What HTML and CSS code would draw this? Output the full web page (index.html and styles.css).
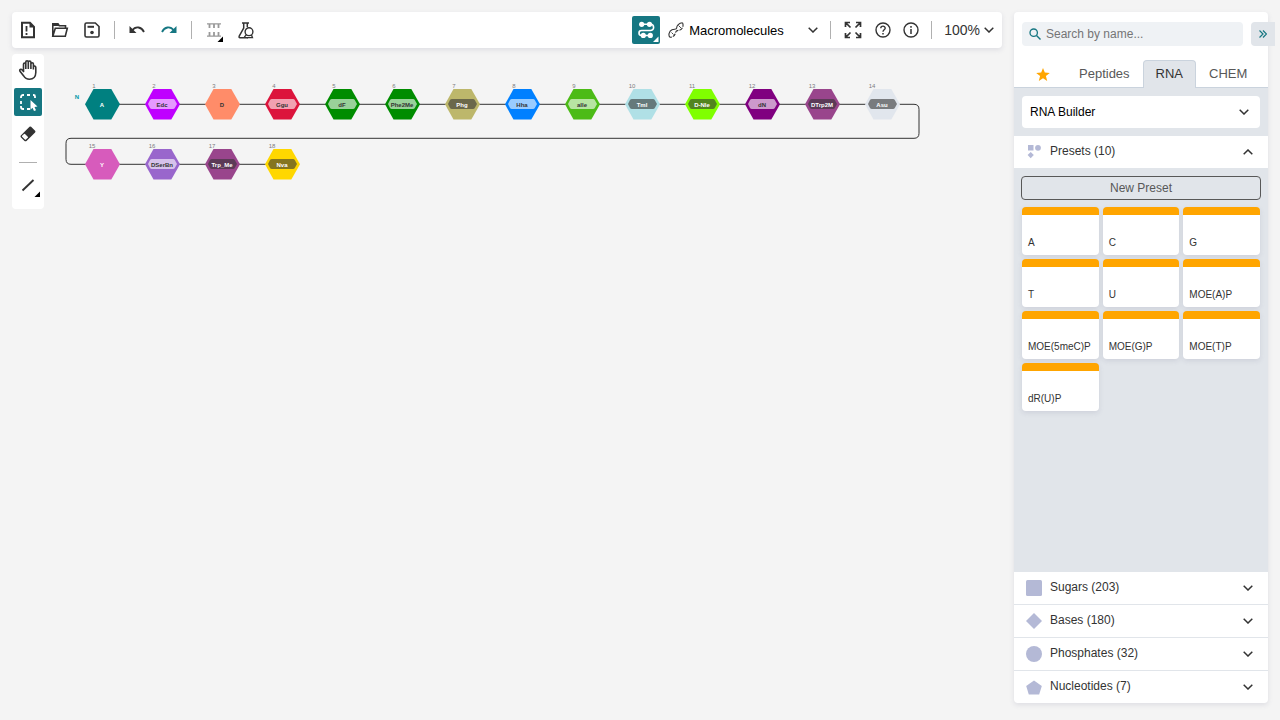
FILE: index.html
```html
<!DOCTYPE html>
<html lang="en">
<head>
<meta charset="utf-8">
<title>Macromolecules editor</title>
<link rel="stylesheet" href="styles.css">
</head>
<body>
<div class="app">
  <main class="editor">
    <header class="topbar">
      <button class="tool" aria-label="New document"><svg width="16" height="18" viewBox="0 0 16 18"><path d="M2 1.800h8l4 4v10.400H2z" fill="none" stroke="#333" stroke-width="2"/><path d="M9.500 1v5.500H14.500z" fill="#333"/><path d="M6.500 5v5.500M6.500 12v2" stroke="#333" stroke-width="1.800"/></svg></button>
      <button class="tool" aria-label="Open"><svg width="18" height="16" viewBox="0 0 18 16"><path d="M1.800 14V1.800h5l1.500 2h6.200v2.400M1.800 14.200l2.500-8h12l-2 8z" fill="none" stroke="#333" stroke-width="1.600"/><path d="M1 1h6l2 3H1z" fill="#333"/></svg></button>
      <button class="tool" aria-label="Save"><svg width="16" height="16" viewBox="0 0 16 16"><path d="M2.500 1h8.800L15 4.500v9a1.500 1.500 0 0 1-1.500 1.500h-11A1.500 1.500 0 0 1 1 13.500v-11A1.500 1.500 0 0 1 2.500 1z" fill="none" stroke="#333" stroke-width="1.600"/><path d="M3.500 4.800h6.500" stroke="#333" stroke-width="2"/><circle cx="8" cy="10.500" r="1.800" fill="#333"/></svg></button>
      <span class="divider"></span>
      <button class="tool" aria-label="Undo"><svg width="16" height="12" viewBox="0 0 16 12"><path d="M3 6.500C7 1.500 12.500 3 15 8" fill="none" stroke="#333" stroke-width="1.800"/><path d="M.5 2v7h7z" fill="#333"/></svg></button>
      <button class="tool" aria-label="Redo"><svg width="16" height="12" viewBox="0 0 16 12"><path d="M13 6.500C9 1.500 3.500 3 1 8" fill="none" stroke="#167782" stroke-width="1.800"/><path d="M15.500 2v7h-7z" fill="#167782"/></svg></button>
      <span class="divider"></span>
      <button class="tool" aria-label="Arrange chains"><svg width="28" height="28" viewBox="0 0 28 28"><path d="M7 7.800h14M7 20.200h14" stroke="#999" stroke-width="1.200"/><path d="M9.500 8v4M14 8v4M18.500 8v4M9.500 16v4M14 16v4M18.500 16v4" stroke="#999" stroke-width="1.800"/><path d="M23 20.500V26h-5.500z" fill="#000"/></svg></button>
      <button class="tool" aria-label="Calculate properties"><svg width="16" height="17" viewBox="0 0 16 17"><path d="M4 1h7M5.700 1v5L1.200 14.200c-.4.900 0 1.500.8 1.500h8M9.300 1v4" fill="none" stroke="#333" stroke-width="1.500"/><circle cx="11" cy="9.700" r="3.900" fill="#fff" stroke="#333" stroke-width="1.400"/><path d="M8.500 12.500l-2.200 2.700M13.500 13L14.500 15.700H9" fill="none" stroke="#333" stroke-width="1.300"/></svg></button>
      <span class="spacer"></span>
      <button class="tool active" aria-label="Snake layout"><svg width="28" height="28" viewBox="0 0 28 28"><path d="M9.500 8.300h9a3 3 0 0 1 0 6.200h-9a2.500 2.500 0 0 0 0 5h9" fill="none" stroke="#fff" stroke-width="1.600"/><circle cx="9.700" cy="8.300" r="2.600" fill="#fff"/><circle cx="17.500" cy="8.300" r="2.600" fill="#fff"/><circle cx="11.300" cy="19.400" r="2.600" fill="#fff"/><circle cx="18.300" cy="19.400" r="2.600" fill="#fff"/><path d="M26.500 20.500V26h-5.500z" fill="#fff"/></svg></button>
      <div class="mode">
        <svg width="16" height="16" viewBox="0 0 16 16" fill="none" stroke="#333" stroke-width="1.100"><path d="M2 15.300C0 13.500 1 9 4 7.700c2.500-1 4.500.3 4.700-1.700C8.500 3.500 11 1 14.500.8"/><path d="M14.500.8c1.500 3-.3 7-3.500 7.500-2 .3-3 .2-3.400 2C7 13.500 5 15.300 2 15.300" stroke-dasharray="4 1"/><path d="M10.500 3.500l2.500 2.500M3.500 10.500l2 2" stroke-width=".900"/></svg>
        <select aria-label="Editor mode"><option>Macromolecules</option><option>Molecules</option></select>
        <svg width="10" height="6" viewBox="0 0 10 6"><path d="M.7.700L5 5 9.300.700" class="chev"/></svg>
      </div>
      <span class="divider"></span>
      <button class="tool" aria-label="Full screen"><svg width="18" height="18" viewBox="0 0 18 18"><path d="M2 2l4.500 4.500M16 2l-4.500 4.500M2 16l4.500-4.500M16 16l-4.500-4.500M1.500 6V1.500H6M12 1.500h4.500V6M1.500 12v4.500H6M16.500 12v4.500H12" fill="none" stroke="#333" stroke-width="1.700"/></svg></button>
      <div class="pair">
        <button class="tool" aria-label="Help"><svg width="16" height="16" viewBox="0 0 16 16"><circle cx="8" cy="8" r="7" fill="none" stroke="#333" stroke-width="1.400"/><path d="M5.800 6.300C5.800 3.400 10.300 3.500 10.200 6.200 10.100 7.800 8 7.900 8 9.800" fill="none" stroke="#333" stroke-width="1.400"/><path d="M8 11v1.600" stroke="#333" stroke-width="1.500"/></svg></button>
        <button class="tool" aria-label="About"><svg width="16" height="16" viewBox="0 0 16 16"><circle cx="8" cy="8" r="7" fill="none" stroke="#333" stroke-width="1.400"/><path d="M8 7v5M8 4v1.700" stroke="#333" stroke-width="1.500"/></svg></button>
      </div>
      <span class="divider close"></span>
      <button class="zoom">100%<svg width="10" height="6" viewBox="0 0 10 6"><path d="M.7.700L5 5 9.300.700" class="chev"/></svg></button>
    </header>

    <div class="workspace">
      <nav class="sidebar" aria-label="Tools">
        <button class="tool" aria-label="Hand"><svg width="20" height="22" viewBox="0 0 20 22"><path d="M5.500 12V5.200c0-1.700 2.300-1.700 2.300 0M7.800 10V3c0-1.700 2.500-1.700 2.500 0v7M10.300 3.200c0-1.600 2.600-1.600 2.600 0V10M12.900 5c0-1.600 2.500-1.600 2.500 0v5.500M15.400 8c.3-1.400 2.400-1.200 2.400.4v5.200c0 4-2.500 6.700-6.300 6.700-3.200 0-4.700-1.400-6-3.600L2 12.300c-1-1.800 1-2.700 2.200-1.300l1.800 2" fill="none" stroke="#333" stroke-width="1.600"/></svg></button>
        <button class="tool active" aria-label="Select"><svg width="28" height="28" viewBox="0 0 28 28"><path d="M7 10V9a2 2 0 0 1 2-2h1M13 7h3M19 7h.500a1.500 1.500 0 0 1 1.500 1.500V10M7 13v3M7 18v1a2 2 0 0 0 2 2h1M13 21h3" fill="none" stroke="#fff" stroke-width="1.800"/><path d="M16.500 12l7 6.500-3 .4 1.500 3.300-2 .9-1.500-3.300-2 1.900z" fill="#fff"/></svg></button>
        <button class="tool" aria-label="Erase"><svg width="18" height="18" viewBox="0 0 18 18"><path d="M10.500 1.800q.8-.8 1.600 0l4 4q.8.800 0 1.600l-8.600 8.500q-1 .8-2 0l-3.700-3.700q-.7-.9 0-1.700z" fill="#333"/><path d="M5.500 9.500l2.800 2.800-1.900 1.800-2.800-2.800z" fill="#fff" stroke="#fff" stroke-width="1.400" stroke-linejoin="round"/></svg></button>
        <span class="rule"></span>
        <button class="tool" aria-label="Bond"><svg width="28" height="28" viewBox="0 0 28 28"><path d="M8.500 18.500l11-10.500" stroke="#333" stroke-width="1.900"/><path d="M26 19.500V25h-5.500z" fill="#000"/></svg></button>
      </nav>

      <svg class="canvas" role="img" aria-label="Peptide sequence">
        <defs>
          <path id="hex" d="M-17 .3L-8.500-15H9.300L18 .3 9.300 15.600H-8.500z"/>
          <path id="pill" d="M-14 0L-12-4Q-11.500-5-10-5H11Q12.300-5 12.800-4L15 0 12.800 4Q12.300 5 11 5H-10Q-11.500 5-12 4z"/>
        </defs>
        <path class="bond" d="M58 50.300H870q5 0 5 5V79.300q0 5-5 5H27q-5 0-5 5v16q0 5 5 5H238"/>
        <text class="terminus" x="33" y="45">N</text>
        <g transform="translate(58 50)"><use href="#hex" fill="#008080"/><text class="num" x="-8" y="-16">1</text><text class="name light" y="3">A</text></g>
        <g transform="translate(118 50)"><use href="#hex" fill="#bf00ff"/><use href="#pill" class="pale"/><text class="num" x="-8" y="-16">2</text><text class="name" y="3">Edc</text></g>
        <g transform="translate(178 50)"><use href="#hex" fill="#ff8c69"/><text class="num" x="-8" y="-16">3</text><text class="name" y="3">D</text></g>
        <g transform="translate(238 50)"><use href="#hex" fill="#dc143c"/><use href="#pill" class="pale"/><text class="num" x="-8" y="-16">4</text><text class="name" y="3">Ggu</text></g>
        <g transform="translate(298 50)"><use href="#hex" fill="#008c00"/><use href="#pill" class="pale"/><text class="num" x="-8" y="-16">5</text><text class="name" y="3">dF</text></g>
        <g transform="translate(358 50)"><use href="#hex" fill="#008c00"/><use href="#pill" class="pale"/><text class="num" x="-8" y="-16">6</text><text class="name" y="3">Phe2Me</text></g>
        <g transform="translate(418 50)"><use href="#hex" fill="#bdb76b"/><use href="#pill" class="dark"/><text class="num" x="-8" y="-16">7</text><text class="name light" y="3">Phg</text></g>
        <g transform="translate(478 50)"><use href="#hex" fill="#0080ff"/><use href="#pill" class="pale"/><text class="num" x="-8" y="-16">8</text><text class="name" y="3">Hha</text></g>
        <g transform="translate(538 50)"><use href="#hex" fill="#4cbb17"/><use href="#pill" class="pale"/><text class="num" x="-8" y="-16">9</text><text class="name" y="3">aIle</text></g>
        <g transform="translate(598 50)"><use href="#hex" fill="#b0e0e6"/><use href="#pill" class="dark"/><text class="num" x="-10" y="-16">10</text><text class="name light" y="3">Tml</text></g>
        <g transform="translate(658 50)"><use href="#hex" fill="#80ff00"/><use href="#pill" class="dark"/><text class="num" x="-10" y="-16">11</text><text class="name light" y="3">D-Nle</text></g>
        <g transform="translate(718 50)"><use href="#hex" fill="#800080"/><use href="#pill" class="pale"/><text class="num" x="-10" y="-16">12</text><text class="name" y="3">dN</text></g>
        <g transform="translate(778 50)"><use href="#hex" fill="#99458c"/><use href="#pill" class="dark"/><text class="num" x="-10" y="-16">13</text><text class="name light" y="3">DTrp2M</text></g>
        <g transform="translate(838 50)"><use href="#hex" fill="#e1e6ed"/><use href="#pill" class="dark"/><text class="num" x="-10" y="-16">14</text><text class="name light" y="3">Asu</text></g>
        <g transform="translate(58 110)"><use href="#hex" fill="#d75bbc"/><text class="num" x="-10" y="-16">15</text><text class="name light" y="3">Y</text></g>
        <g transform="translate(118 110)"><use href="#hex" fill="#9966cc"/><use href="#pill" class="pale"/><text class="num" x="-10" y="-16">16</text><text class="name" y="3">DSerBn</text></g>
        <g transform="translate(178 110)"><use href="#hex" fill="#99458c"/><use href="#pill" class="dark"/><text class="num" x="-10" y="-16">17</text><text class="name light" y="3">Trp_Me</text></g>
        <g transform="translate(238 110)"><use href="#hex" fill="#ffd700"/><use href="#pill" class="dark"/><text class="num" x="-10" y="-16">18</text><text class="name light" y="3">Nva</text></g>
      </svg>
    </div>
  </main>

  <aside class="library">
    <div class="search-row">
      <label class="search">
        <svg width="12" height="12" viewBox="0 0 12 12"><circle cx="4.700" cy="4.700" r="3.700" fill="none" stroke="#167782" stroke-width="1.300"/><path d="M7.500 7.500l4 4" stroke="#167782" stroke-width="1.400"/></svg>
        <input type="text" placeholder="Search by name..." aria-label="Search by name">
      </label>
      <button class="collapse" aria-label="Hide library"><svg width="8" height="8" viewBox="0 0 8 8"><path d="M.5.500L4 4 .5 7.500M4 .500L7.500 4 4 7.500" fill="none" stroke="#167782" stroke-width="1.200"/></svg></button>
    </div>
    <div class="tabs" role="tablist">
      <button class="tab" role="tab" aria-label="Favorites"><svg width="14" height="13" viewBox="0 0 14 13"><path d="M7 0l1.800 4.600 5 .3-3.900 3.200L11.200 13 7 10.200 2.800 13l1.300-4.900L.2 4.900l5-.3z" fill="#ffa500"/></svg></button>
      <button class="tab" role="tab">Peptides</button>
      <button class="tab selected" role="tab" aria-selected="true">RNA</button>
      <button class="tab" role="tab">CHEM</button>
    </div>
    <div class="builder">
      <div class="builder-box">
        <select aria-label="Builder"><option>RNA Builder</option></select>
        <svg width="10" height="6" viewBox="0 0 10 6"><path d="M.7.700L5 5 9.300.700" class="chev"/></svg>
      </div>
    </div>
    <button class="group open" aria-expanded="true">
      <svg width="16" height="16" viewBox="0 0 16 16" fill="#b4b9d6"><path d="M2 1h5.500v5.500H2z"/><circle cx="12" cy="3.800" r="2.900"/><path d="M4.700 8l3.100 3.100-3.100 3.100-3.100-3.100z"/></svg>
      <span>Presets (10)</span>
      <svg width="10" height="6" viewBox="0 0 10 6"><path d="M.7 5.300L5 1l4.300 4.300" class="chev"/></svg>
    </button>
    <section class="presets">
      <button class="new-preset">New Preset</button>
      <div class="cards">
        <button class="card">A</button>
        <button class="card">C</button>
        <button class="card">G</button>
        <button class="card">T</button>
        <button class="card">U</button>
        <button class="card">MOE(A)P</button>
        <button class="card">MOE(5meC)P</button>
        <button class="card">MOE(G)P</button>
        <button class="card">MOE(T)P</button>
        <button class="card">dR(U)P</button>
      </div>
    </section>
    <button class="group"><svg width="16" height="16" viewBox="0 0 16 16"><rect width="16" height="16" rx="1.500" fill="#b4b9d6"/></svg><span>Sugars (203)</span><svg width="10" height="6" viewBox="0 0 10 6"><path d="M.7.700L5 5 9.300.700" class="chev"/></svg></button>
    <button class="group"><svg width="16" height="16" viewBox="0 0 16 16"><path d="M8 0l8 8-8 8-8-8z" fill="#b4b9d6"/></svg><span>Bases (180)</span><svg width="10" height="6" viewBox="0 0 10 6"><path d="M.7.700L5 5 9.300.700" class="chev"/></svg></button>
    <button class="group"><svg width="16" height="16" viewBox="0 0 16 16"><circle cx="8" cy="8" r="8" fill="#b4b9d6"/></svg><span>Phosphates (32)</span><svg width="10" height="6" viewBox="0 0 10 6"><path d="M.7.700L5 5 9.300.700" class="chev"/></svg></button>
    <button class="group"><svg width="16" height="16" viewBox="0 0 16 16"><path d="M8 1.500l7.800 5.500-2.600 8.500H2.800L.2 7z" fill="#b4b9d6"/></svg><span>Nucleotides (7)</span><svg width="10" height="6" viewBox="0 0 10 6"><path d="M.7.700L5 5 9.300.700" class="chev"/></svg></button>
  </aside>
</div>
</body>
</html>
```

FILE: styles.css
```css
* { box-sizing: border-box; }
body {
  margin: 0;
  background: #f4f4f4;
  color: #333;
  font-family: "Liberation Sans", Arial, sans-serif;
  font-size: 12px;
}
button, input, select { font: inherit; color: inherit; border: 0; margin: 0; padding: 0; background: none; }
button { cursor: pointer; }
svg { display: block; flex: none; }
select { appearance: none; outline: none; }
.chev { fill: none; stroke: #333; stroke-width: 1.5; }

.app { display: flex; gap: 12px; min-height: 100vh; padding: 12px 12px 17px; }
.editor { flex: 1; min-width: 0; display: flex; flex-direction: column; gap: 6px; }

.topbar {
  display: flex;
  align-items: center;
  gap: 4px;
  height: 36px;
  padding: 0 8px 0 2px;
  background: #fff;
  border-radius: 4px;
  box-shadow: 0 2px 5px rgba(103, 104, 132, .15);
}
.tool { width: 28px; height: 28px; display: flex; align-items: center; justify-content: center; border-radius: 2px; }
.tool.active { background: #167782; }
.divider { width: 1px; height: 18px; margin: 0 4px; background: #b0b0b0; }
.divider.close { margin: 0 8px 0 2px; }
.spacer { flex: 1; }
.pair { display: flex; margin-left: -2px; }
.mode { display: flex; align-items: center; width: 158px; padding: 0 4px; gap: 5px; color: #000; font-size: 13px; }
.mode select { flex: 1; min-width: 0; }
.zoom { display: flex; align-items: center; gap: 4px; font-size: 14px; }

.workspace { flex: 1; display: flex; align-items: flex-start; }
.sidebar {
  width: 32px;
  display: flex;
  flex-direction: column;
  align-items: center;
  gap: 4px;
  padding: 2px 2px 9px;
  background: #fff;
  border-radius: 4px;
}
.rule { width: 18px; height: 1px; margin: 10px 0 5px; background: #b0b0b0; }
.canvas { flex: 1; min-width: 0; align-self: stretch; width: 100%; height: auto; }
.bond { fill: none; stroke: #333; stroke-width: 1; }
.num { font-size: 6px; fill: #7c7c7f; text-anchor: middle; }
.name { font-size: 6px; font-weight: 700; fill: #333; text-anchor: middle; }
.light { fill: #fff; }
.terminus { font-size: 6px; font-weight: 700; fill: #0097a8; text-anchor: middle; }
.pale { fill: #fff; fill-opacity: .6; }
.dark { fill: #333; fill-opacity: .6; }

.library {
  width: 254px;
  display: flex;
  flex-direction: column;
  background: #fff;
  border-radius: 4px;
  box-shadow: 0 2px 5px rgba(103, 104, 132, .15);
}
.search-row { display: flex; gap: 8px; margin: 10px -7px 14px 8px; }
.search { flex: 1; display: flex; align-items: center; gap: 5px; height: 24px; padding: 0 7px; background: #eff2f5; border-radius: 4px; }
.search input { flex: 1; min-width: 0; outline: none; }
.search input::placeholder { color: #757575; opacity: 1; }
.collapse { width: 24px; height: 24px; display: flex; align-items: center; justify-content: center; background: #e1e5ea; border-radius: 4px 0 0 4px; }
.tabs { display: flex; padding: 0 8px; border-bottom: 1px solid #cad3dd; }
.tab { display: flex; align-items: center; justify-content: center; height: 28px; padding: 0 12px 2px; margin-bottom: -1px; border: 1px solid transparent; border-bottom: 0; font-size: 13px; color: #585858; }
.tab:first-child { padding: 0 15px 0 13px; }
.tab.selected { background: #e1e5ea; border-color: #cad3dd; border-radius: 4px 4px 0 0; color: #333; }
.builder { padding: 8px; background: #e1e5ea; }
.builder-box { display: flex; align-items: center; height: 32px; padding: 0 11px 0 8px; background: #fff; border-radius: 4px; color: #000; }
.builder-box select { flex: 1; }
.group { display: flex; align-items: center; gap: 8px; height: 33px; padding: 0 15px 0 12px; border-bottom: 1px solid #e1e5ea; text-align: left; }
.group.open { height: 32px; border: 0; }
.group:last-child { height: 32px; border: 0; }
.group span { flex: 1; padding-bottom: 2px; }
.presets { flex: 1; padding: 8px 7px; background: #e1e5ea; }
.new-preset { display: block; width: 100%; height: 24px; border: 1px solid #585858; border-radius: 4px; color: #585858; }
.cards { display: grid; grid-template-columns: repeat(3, 1fr); gap: 4px; margin: 7px 1px 0; }
.card {
  height: 48px;
  padding: 14px 6px 0;
  border-top: 8px solid #ffa500;
  border-radius: 4px;
  background: #fff;
  box-shadow: 0 2px 5px rgba(103, 104, 132, .15);
  font-size: 10px;
  text-align: left;
  white-space: nowrap;
}
```
